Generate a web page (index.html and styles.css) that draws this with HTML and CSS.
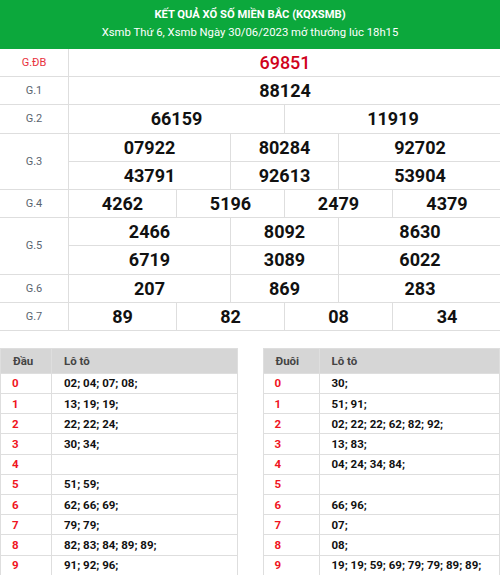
FILE: index.html
```html
<!DOCTYPE html>
<html lang="vi">
<head>
<meta charset="utf-8">
<title>KQXSMB</title>
<link rel="stylesheet" href="styles.css">
</head>
<body>
<div class="head">
  <div class="title">KẾT QUẢ XỔ SỐ MIỀN BẮC (KQXSMB)</div>
  <div class="sub">Xsmb Thứ 6, Xsmb Ngày 30/06/2023 mở thưởng lúc 18h15</div>
</div>

<div class="results">
  <div class="lbl red">G.ĐB</div>
  <div class="num special s6">69851</div>

  <div class="lbl">G.1</div>
  <div class="num s6">88124</div>

  <div class="lbl">G.2</div>
  <div class="num s3">66159</div>
  <div class="num s3">11919</div>

  <div class="lbl r2">G.3</div>
  <div class="num s2a">07922</div>
  <div class="num s2b">80284</div>
  <div class="num s2a">92702</div>
  <div class="num s2a">43791</div>
  <div class="num s2b">92613</div>
  <div class="num s2a">53904</div>

  <div class="lbl">G.4</div>
  <div class="num">4262</div>
  <div class="num s2b">5196</div>
  <div class="num s2b">2479</div>
  <div class="num">4379</div>

  <div class="lbl r2">G.5</div>
  <div class="num s2a">2466</div>
  <div class="num s2b">8092</div>
  <div class="num s2a">8630</div>
  <div class="num s2a">6719</div>
  <div class="num s2b">3089</div>
  <div class="num s2a">6022</div>

  <div class="lbl">G.6</div>
  <div class="num s2a">207</div>
  <div class="num s2b">869</div>
  <div class="num s2a">283</div>

  <div class="lbl">G.7</div>
  <div class="num">89</div>
  <div class="num s2b">82</div>
  <div class="num s2b">08</div>
  <div class="num">34</div>
</div>

<div class="loto">
  <table class="lt">
    <thead>
      <tr><th class="c1 w-dau">Đầu</th><th>Lô tô</th></tr>
    </thead>
    <tbody>
      <tr><td class="c1">0</td><td>02; 04; 07; 08;</td></tr>
      <tr><td class="c1">1</td><td>13; 19; 19;</td></tr>
      <tr><td class="c1">2</td><td>22; 22; 24;</td></tr>
      <tr><td class="c1">3</td><td>30; 34;</td></tr>
      <tr><td class="c1">4</td><td></td></tr>
      <tr><td class="c1">5</td><td>51; 59;</td></tr>
      <tr><td class="c1">6</td><td>62; 66; 69;</td></tr>
      <tr><td class="c1">7</td><td>79; 79;</td></tr>
      <tr><td class="c1">8</td><td>82; 83; 84; 89; 89;</td></tr>
      <tr><td class="c1">9</td><td>91; 92; 96;</td></tr>
    </tbody>
  </table>
  <table class="lt">
    <thead>
      <tr><th class="c1 w-duoi">Đuôi</th><th>Lô tô</th></tr>
    </thead>
    <tbody>
      <tr><td class="c1">0</td><td>30;</td></tr>
      <tr><td class="c1">1</td><td>51; 91;</td></tr>
      <tr><td class="c1">2</td><td>02; 22; 22; 62; 82; 92;</td></tr>
      <tr><td class="c1">3</td><td>13; 83;</td></tr>
      <tr><td class="c1">4</td><td>04; 24; 34; 84;</td></tr>
      <tr><td class="c1">5</td><td></td></tr>
      <tr><td class="c1">6</td><td>66; 96;</td></tr>
      <tr><td class="c1">7</td><td>07;</td></tr>
      <tr><td class="c1">8</td><td>08;</td></tr>
      <tr><td class="c1">9</td><td>19; 19; 59; 69; 79; 79; 89; 89;</td></tr>
    </tbody>
  </table>
</div>
</body>
</html>
```

FILE: styles.css
```css
* { box-sizing: border-box; }
html, body { margin: 0; padding: 0; background: #fff; }
body {
  font-family: Roboto, "Noto Sans", Arial, sans-serif;
  color: #111;
  width: 500px;
  overflow: hidden;
}

.head {
  background: #0ca83c;
  color: #fff;
  text-align: center;
  height: 49px;
  padding-top: 6px;
}
.title { font-size: 11.2px; font-weight: 700; line-height: 18px; }
.sub { font-size: 11.3px; line-height: 18px; }

.results {
  display: grid;
  grid-template-columns: 68px 107px 53px 53px 53px 53px 108px;
  grid-auto-rows: 27.2px;
  gap: 1px;
  background: #dedede;
  border-bottom: 1px solid #dedede;
}
.results > div {
  background: #fff;
  display: flex;
  align-items: center;
  justify-content: center;
}
.lbl { font-size: 11px; color: #5b6570; grid-column: 1; }
.lbl.red { color: #e8313d; }
.r2 { grid-row: span 2; }
.num { font-size: 18px; font-weight: 700; color: #111; }
.special { color: #d0021b; font-weight: 500; }
.s6 { grid-column: span 6; }
.s3 { grid-column: span 3; }
.s2a, .s2b { grid-column: span 2; }

.loto {
  display: flex;
  gap: 25px;
  margin-top: 17px;
}
.lt {
  flex: 1;
  border-collapse: collapse;
  font-size: 11.5px;
  font-weight: 700;
  width: 237px;
}
.lt th, .lt td {
  text-align: left;
  border: 1px solid #dedede;
  padding: 0 0 0 12px;
}
.lt th {
  background: #d6d6d6;
  color: #444;
  height: 25px;
}
.lt td { height: 20.2px; color: #111; }
.lt td.c1 { color: #f0141e; padding-left: 11px; }
.w-dau { width: 51px; }
.w-duoi { width: 56px; }
```
